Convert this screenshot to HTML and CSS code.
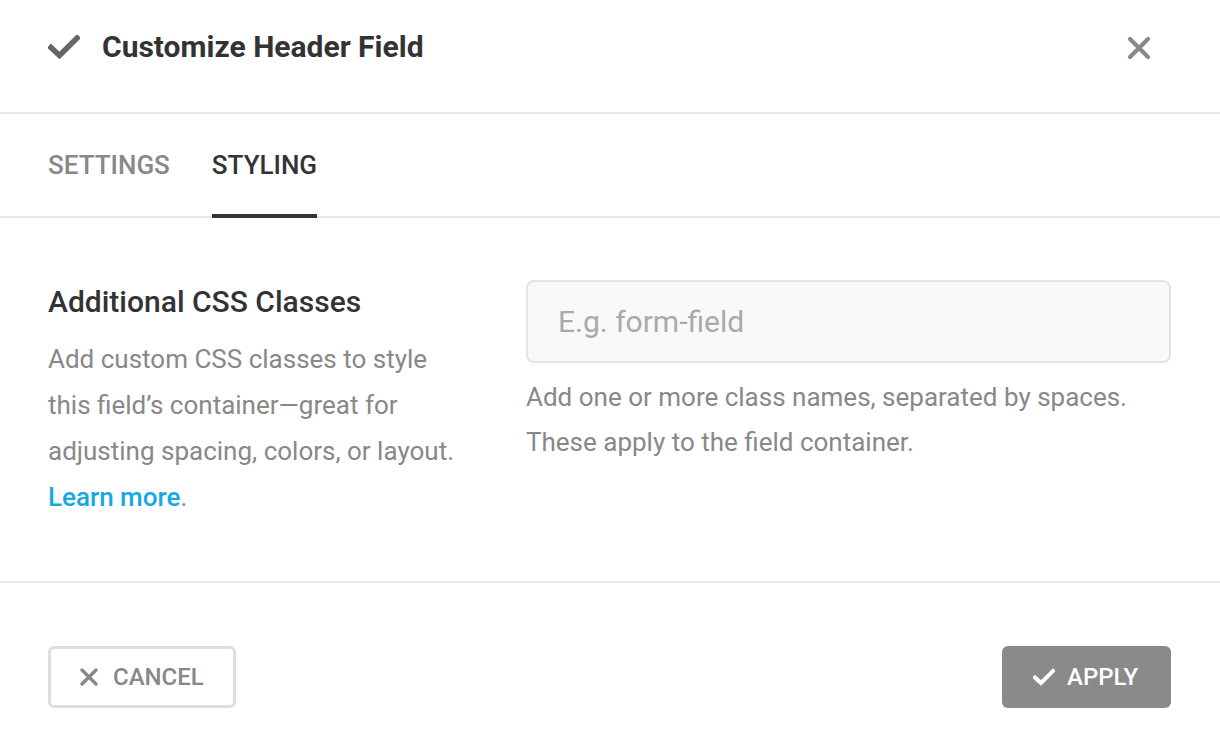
FILE: index.html
```html
<!DOCTYPE html>
<html lang="en">
<head>
<meta charset="utf-8">
<title>Customize Header Field</title>
<link rel="stylesheet" href="styles.css">
</head>
<body>
<div class="dialog">
  <header class="dialog-header">
    <div class="dialog-title">
      <svg class="title-check" viewBox="0 0 32 24" width="32" height="24" aria-hidden="true">
        <path d="M3 12.5 L11.5 20.5 L29 3" fill="none" stroke="#666" stroke-width="5.5" stroke-linecap="square"/>
      </svg>
      <h1>Customize Header Field</h1>
    </div>
    <button class="close-btn" aria-label="Close">
      <svg viewBox="0 0 24 24" width="24" height="24" aria-hidden="true">
        <path d="M3 3 L21 21 M21 3 L3 21" fill="none" stroke="#888" stroke-width="4.2" stroke-linecap="round"/>
      </svg>
    </button>
  </header>

  <nav class="tabs">
    <div class="tab">SETTINGS</div>
    <div class="tab active">STYLING</div>
  </nav>

  <section class="content">
    <div class="field-info">
      <h2>Additional CSS Classes</h2>
      <p>Add custom CSS classes to style this field’s container—great for adjusting spacing, colors, or layout. <a href="#">Learn more</a>.</p>
    </div>
    <div class="field-control">
      <input class="text-input" type="text" placeholder="E.g. form-field">
      <p class="help">Add one or more class names, separated by spaces. These apply to the field container.</p>
    </div>
  </section>

  <footer class="dialog-footer">
    <button class="btn btn-cancel">
      <svg viewBox="0 0 18 18" width="18" height="18" aria-hidden="true">
        <path d="M2 2 L16 16 M16 2 L2 16" fill="none" stroke="#888" stroke-width="3.4" stroke-linecap="round"/>
      </svg>
      <span>CANCEL</span>
    </button>
    <button class="btn btn-apply">
      <svg viewBox="0 0 22 18" width="22" height="18" aria-hidden="true">
        <path d="M2 9.5 L8 15 L20 3" fill="none" stroke="#fff" stroke-width="4" stroke-linecap="square"/>
      </svg>
      <span>APPLY</span>
    </button>
  </footer>
</div>
</body>
</html>
```

FILE: styles.css
```css
html, body {
  margin: 0;
  padding: 0;
  background: #fff;
  overflow: hidden;
}

body {
  font-family: Roboto, "Liberation Sans", Arial, sans-serif;
  color: #333;
}

.dialog {
  width: 1220px;
}

.dialog-header {
  height: 114px;
  box-sizing: border-box;
  padding: 0 49px 0 48px;
  display: flex;
  align-items: center;
  justify-content: space-between;
  border-bottom: 2px solid #e6e6e6;
}

.dialog-title {
  display: flex;
  align-items: center;
  gap: 22px;
  margin-top: -18px;
}

.title-check {
  display: block;
}

.dialog-title h1 {
  margin: 0;
  font-size: 30px;
  font-weight: 700;
  color: #333;
  line-height: 36px;
}

.close-btn {
  background: none;
  border: 0;
  padding: 0;
  margin: -16px 20px 0 0;
  cursor: pointer;
  display: flex;
}

.tabs {
  display: flex;
  gap: 42px;
  padding: 0 48px;
  border-bottom: 2px solid #e6e6e6;
  height: 102px;
}

.tab {
  height: 104px;
  box-sizing: border-box;
  display: flex;
  align-items: center;
  font-size: 26px;
  font-weight: 500;
  color: #888;
  border-bottom: 4px solid transparent;
  margin-bottom: -2px;
  padding-top: 2px;
}

.tab.active {
  color: #333;
  border-bottom-color: #333;
}

.content {
  display: grid;
  grid-template-columns: 412px 1fr;
  column-gap: 66px;
  padding: 66px 49px 0 48px;
  box-sizing: border-box;
  border-bottom: 2px solid #e6e6e6;
  height: 365px;
}

.field-info h2 {
  margin: 0 0 16px;
  font-size: 30px;
  font-weight: 500;
  line-height: 36px;
  color: #333;
}

.field-info p {
  margin: 0;
  font-size: 26px;
  line-height: 46px;
  color: #888;
}

.field-info a {
  color: #17a8e3;
  text-decoration: none;
  font-weight: 500;
}

.text-input {
  display: block;
  width: 100%;
  box-sizing: border-box;
  height: 83px;
  margin-top: -4px;
  padding: 0 30px;
  border: 2px solid #e3e3e3;
  border-radius: 8px;
  background: #f9f9f9;
  font-family: inherit;
  font-size: 30px;
  color: #333;
  outline: none;
}

.text-input::placeholder {
  color: #aaa;
}

.help {
  margin: 12px 0 0;
  font-size: 26px;
  line-height: 45px;
  color: #888;
}

.dialog-footer {
  display: flex;
  justify-content: space-between;
  align-items: flex-start;
  padding: 63px 49px 0 48px;
}

.btn {
  display: flex;
  align-items: center;
  height: 62px;
  box-sizing: border-box;
  border-radius: 6px;
  font-family: inherit;
  font-size: 24px;
  font-weight: 500;
  cursor: pointer;
}

.btn-cancel {
  width: 188px;
  padding: 0 0 0 29px;
  gap: 15px;
  background: #fff;
  border: 3px solid #dedede;
  color: #888;
}

.btn-apply {
  width: 169px;
  padding: 0 0 0 31px;
  gap: 12px;
  background: #8a8a8a;
  border: 0;
  color: #fff;
}

.btn svg {
  display: block;
}
```
